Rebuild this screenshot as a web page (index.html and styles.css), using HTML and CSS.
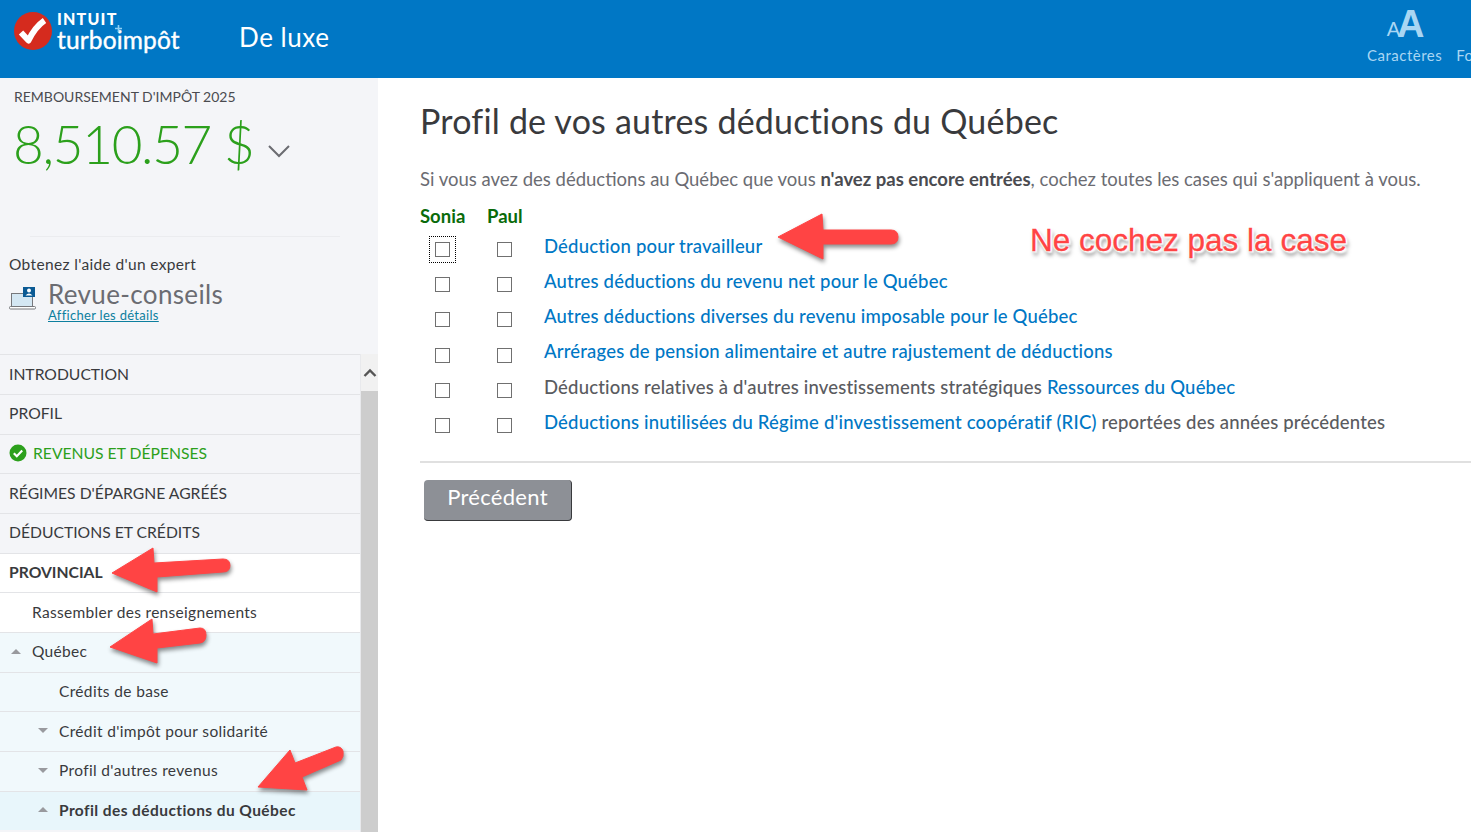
FILE: index.html
```html
<!DOCTYPE html>
<html lang="fr">
<head>
<meta charset="utf-8">
<title>TurboImpôt</title>
<link rel="stylesheet" href="styles.css">
</head>
<body>
<header class="topbar">
  <div class="logo">
    <svg class="logo-mark" width="38" height="38" viewBox="0 0 38 38"><circle cx="19" cy="19" r="19" fill="#d52b1e"/><path d="M7 20.5 L14.5 28.5 Q21 15 30.5 8.5" fill="none" stroke="#fff" stroke-width="6" stroke-linejoin="round"/></svg>
    <div class="logo-text"><span class="logo-intuit">INTUIT</span><span class="logo-name">turboimpôt</span>
      <svg class="logo-plus" width="7" height="7" viewBox="0 0 7 7"><path d="M3.500 0 V7 M0 3.500 H7" stroke="#8fd0f5" stroke-width="1.600"/></svg>
    </div>
  </div>
  <div class="edition">De luxe</div>
  <div class="tools">
    <div class="tool"><div class="aa"><span class="aa-small">A</span><span class="aa-big">A</span></div><span>Caractères</span></div>
    <div class="tool tool-cut"><span>Fo</span></div>
  </div>
</header>
<div class="page">
  <aside class="sidebar">
    <section class="refund">
      <div class="refund-label">REMBOURSEMENT D'IMPÔT 2025</div>
      <div class="refund-row"><span class="refund-amount">8,510.57 $</span>
        <svg class="chev" width="24" height="14" viewBox="0 0 24 14"><path d="M2 2 L12 12 L22 2" fill="none" stroke="#6b6c72" stroke-width="2"/></svg></div>
    </section>
    <div class="divider"></div>
    <section class="expert">
      <div class="expert-title">Obtenez l'aide d'un expert</div>
      <div class="expert-row">
        <svg class="laptop" width="27" height="24" viewBox="0 0 27 24"><rect x="2.500" y="7.500" width="21" height="13" fill="#d4e7f3" stroke="#77787c"/><rect x="0.500" y="20.500" width="26" height="2.500" rx="1" fill="#fff" stroke="#77787c"/><rect x="14" y="1" width="12" height="10" fill="#0b5a94"/><circle cx="20" cy="4.500" r="2" fill="#fff"/><path d="M16.500 9.500 Q20 5.500 23.500 9.500Z" fill="#fff"/></svg>
        <div class="expert-text"><div class="expert-name">Revue-conseils</div><a class="expert-link">Afficher les détails</a></div>
      </div>
    </section>
    <div class="nav-wrap">
      <nav class="nav">
        <div class="row">INTRODUCTION</div>
        <div class="row">PROFIL</div>
        <div class="row row-done"><svg class="done" width="18" height="18" viewBox="0 0 18 18"><circle cx="9" cy="9" r="8.500" fill="#2ca01c"/><path d="M4.800 9.200 L7.800 12.200 L13.200 6.600" fill="none" stroke="#fff" stroke-width="2.200"/></svg>REVENUS ET DÉPENSES</div>
        <div class="row">RÉGIMES D'ÉPARGNE AGRÉÉS</div>
        <div class="row">DÉDUCTIONS ET CRÉDITS</div>
        <div class="row row-white row-strong">PROVINCIAL</div>
        <div class="row row-white row-sub">Rassembler des renseignements</div>
        <div class="row row-tint row-sub row-caret1"><i class="caret up"></i>Québec</div>
        <div class="row row-tint row-sub2">Crédits de base</div>
        <div class="row row-tint row-sub2 row-caret2"><i class="caret down"></i>Crédit d'impôt pour solidarité</div>
        <div class="row row-tint row-sub2 row-caret2"><i class="caret down"></i>Profil d'autres revenus</div>
        <div class="row row-active row-sub2 row-caret2 row-bold"><i class="caret up"></i>Profil des déductions du Québec</div>
      </nav>
      <div class="scrollbar">
        <div class="scroll-up"><svg width="14" height="10" viewBox="0 0 14 10"><path d="M1.500 8 L7 2.500 L12.500 8" fill="none" stroke="#555" stroke-width="2.400"/></svg></div>
        <div class="scroll-thumb"></div>
      </div>
    </div>
  </aside>
  <main class="content">
    <h1 class="title">Profil de vos autres déductions du Québec</h1>
    <p class="intro">Si vous avez des déductions au Québec que vous <b>n'avez pas encore entrées</b>, cochez toutes les cases qui s'appliquent à vous.</p>
    <div class="grid">
      <div class="who">Sonia</div><div class="who">Paul</div><div></div>
      <div class="cell"><span class="focus"><span class="box"></span></span></div><div class="cell"><span class="box"></span></div><div class="label"><a>Déduction pour travailleur</a></div>
      <div class="cell"><span class="box"></span></div><div class="cell"><span class="box"></span></div><div class="label"><a>Autres déductions du revenu net pour le Québec</a></div>
      <div class="cell"><span class="box"></span></div><div class="cell"><span class="box"></span></div><div class="label"><a>Autres déductions diverses du revenu imposable pour le Québec</a></div>
      <div class="cell"><span class="box"></span></div><div class="cell"><span class="box"></span></div><div class="label"><a>Arrérages de pension alimentaire et autre rajustement de déductions</a></div>
      <div class="cell"><span class="box"></span></div><div class="cell"><span class="box"></span></div><div class="label">Déductions relatives à d'autres investissements stratégiques <a>Ressources du Québec</a></div>
      <div class="cell"><span class="box"></span></div><div class="cell"><span class="box"></span></div><div class="label"><a>Déductions inutilisées du Régime d'investissement coopératif (RIC)</a> reportées des années précédentes</div>
    </div>
    <hr class="rule">
    <button class="back">Précédent</button>
  </main>
</div>
<div class="note">Ne cochez pas la case</div>
<svg class="arrows" width="1471" height="832" viewBox="0 0 1471 832">
  <g fill="#ff4444" stroke="#ff4444" stroke-width="1" stroke-linejoin="round">
    <path d="M112 573 L153 548 L154 563 L223 559 Q230 559 230 565.500 Q230 572 223 572 L157 577 L157 592 Z"/>
    <path d="M110 647 L152 619 L153 634 L200 628 Q206 628 206 635 Q206 642 200 643 L157 648 L157 663 Z"/>
    <path d="M258 787 L290 750 L295 763 L336 747 Q341 746 343 751 Q344 757 341 760 L302 777 L307 790 Z"/>
    <path d="M778 237 L822 214 L823 230 L891 230 Q898 230 898 237 Q898 244 891 244 L823 244 L823 259 Z"/>
  </g>
</svg>
</body>
</html>
```
FILE: styles.css
```css
* { box-sizing: border-box; }
html, body { margin: 0; height: 832px; overflow: hidden; background: #fff; }
body { position: relative; font-family: Lato, "Open Sans", sans-serif; color: #393a3d; }

.topbar { height: 78px; background: #0077c5; display: flex; align-items: flex-start; color: #fff; overflow: hidden; }
.logo { display: flex; margin: 12px 0 0 14px; width: 225px; }
.logo-mark { flex: none; }
.logo-text { position: relative; display: flex; flex-direction: column; margin-left: 5px; }
.logo-intuit { font-size: 16px; font-weight: 900; letter-spacing: 1.200px; line-height: 14px; }
.logo-name { font-size: 24.500px; font-weight: 400; line-height: 28px; letter-spacing: .15px; -webkit-text-stroke: .4px #fff; }
.logo-plus { position: absolute; left: 58px; top: 13px; }
.edition { font-size: 26px; margin-top: 21px; line-height: 32px; letter-spacing: .55px; }
.tools { margin-left: auto; display: flex; color: #a9d6f3; font-size: 15px; letter-spacing: .5px; gap: 14px; width: 104px; overflow: hidden; flex: none; }
.tool { display: flex; flex-direction: column; align-items: center; white-space: nowrap; flex: none; }
.tool-cut { padding-top: 46px; }
.aa { height: 46px; display: flex; align-items: flex-end; font-family: "Liberation Sans", sans-serif; font-weight: 700; color: #a9d6f3; line-height: 1; letter-spacing: 0; margin-left: 2px; }
.aa-small { font-size: 20px; margin-bottom: 7px; font-weight: 400; }
.aa-big { font-size: 38px; margin-left: -3px; margin-bottom: 3px; }

.page { display: flex; height: 754px; }
.sidebar { width: 378px; flex: none; background: #f4f5f8; display: flex; flex-direction: column; }
.refund { padding: 10px 0 0 14px; height: 158px; }
.refund-label { font-size: 14px; line-height: 17px; color: #4a4b50; }
.refund-row { display: flex; align-items: center; margin-top: 8px; }
.refund-amount { color: #2ca01c; font-size: 53px; line-height: 62px; font-weight: 300; letter-spacing: -1.300px; margin-left: -1px; }
.chev { margin-left: 13px; margin-top: 14px; }
.divider { height: 1px; background: #ebecef; margin: 0 38px 0 30px; }
.expert { padding: 17px 0 0 9px; height: 117.300px; }
.expert-title { font-size: 15.500px; line-height: 20px; letter-spacing: .35px; }
.expert-row { display: flex; align-items: flex-start; margin-top: 5px; }
.laptop { margin-top: 7px; flex: none; }
.expert-text { margin-left: 12px; }
.expert-name { font-size: 26px; line-height: 30px; color: #6b6c72; letter-spacing: .35px; }
.expert-link { display: block; font-size: 13px; line-height: 13px; letter-spacing: .3px; color: #0d7f9f; text-decoration: underline; }

.nav-wrap { display: flex; flex: 1; min-height: 0; }
.nav { width: 361px; flex: none; border-right: 1px solid #e8e9ec; }
.row { height: 39.670px; border-top: 1px solid #e3e4e7; display: flex; align-items: center; padding: 0 0 2px 9px; font-size: 15.700px; color: #393a3d; white-space: nowrap; }
.row-done { color: #2ca01c; }
.done { margin-right: 6px; flex: none; }
.row-white { background: #fff; }
.row-strong { font-weight: 700; }
.row-sub { padding-left: 32px; font-size: 15.500px; letter-spacing: .3px; }
.row-sub2 { padding-left: 59px; font-size: 15.500px; letter-spacing: .35px; }
.row-tint { background: #f1f9fc; }
.row-active { background: #e8f6fb; }
.row-bold { font-weight: 700; letter-spacing: .42px; }
.row-caret1 { padding-left: 11px; }
.row-caret2 { padding-left: 38px; }
.caret { width: 0; height: 0; border-left: 5px solid transparent; border-right: 5px solid transparent; margin-right: 11px; flex: none; }
.caret.up { border-bottom: 5px solid #999a9e; }
.caret.down { border-top: 5px solid #999a9e; }

.scrollbar { flex: 1; display: flex; flex-direction: column; }
.scroll-up { height: 37px; background: #f1f1f1; display: flex; align-items: center; justify-content: center; }
.scroll-thumb { flex: 1; background: #cdcdcd; }

.content { flex: 1; min-width: 0; padding: 22px 0 0 42px; }
.title { margin: 0; font-size: 34px; line-height: 42px; font-weight: 400; color: #393a3d; letter-spacing: .2px; white-space: nowrap; }
.intro { margin: 25px 0 0; font-size: 18.500px; line-height: 24px; color: #6b6c72; white-space: nowrap; }
.intro b { color: #4a4b50; }
.grid { display: grid; grid-template-columns: 45px 35px 1fr; column-gap: 22px; grid-template-rows: 24.900px; grid-auto-rows: 35.200px; margin-top: 13px; }
.who { color: #0a6b0a; font-weight: 700; font-size: 18.500px; line-height: 24px; white-space: nowrap; }
.cell { display: flex; justify-content: center; align-items: center; padding-top: 6px; }
.box { display: block; width: 15px; height: 15px; border: 1.400px solid #707070; background: #fff; }
.focus { display: flex; width: 27px; height: 27px; border: 1px dotted #000; align-items: center; justify-content: center; }
.label { font-size: 18.500px; letter-spacing: .18px; line-height: 35.200px; font-weight: 500; color: #5a5b60; white-space: nowrap; }
.label a { color: #0077c5; }
.rule { height: 2px; border: 0; background: #e0e0e0; margin: 21.300px 0 0; }
.back { display: block; margin: 17px 0 0 4px; width: 148px; height: 41px; background: #8d9096; color: #fff; border: 0; border-right: 1px solid #393a3d; border-bottom: 1px solid #393a3d; border-radius: 4px; font-family: inherit; font-size: 22px; letter-spacing: .3px; padding: 0 0 7px; }

.note { position: absolute; left: 1030px; top: 220px; font-family: "Liberation Sans", sans-serif; font-size: 31.500px; line-height: 40px; color: #ff4444; -webkit-text-stroke: .3px #ff4444; white-space: nowrap; text-shadow: 0 0 2px #fff, 1px 0 2px #fff, -1px 0 2px #fff, 0 1px 2px #fff, 0 -1px 2px #fff, 2px 2px 2px #fff, 2px 4px 4px #666; }
.arrows { position: absolute; left: 0; top: 0; pointer-events: none; filter: drop-shadow(1px 3px 2px rgba(0,0,0,.45)); }
```
